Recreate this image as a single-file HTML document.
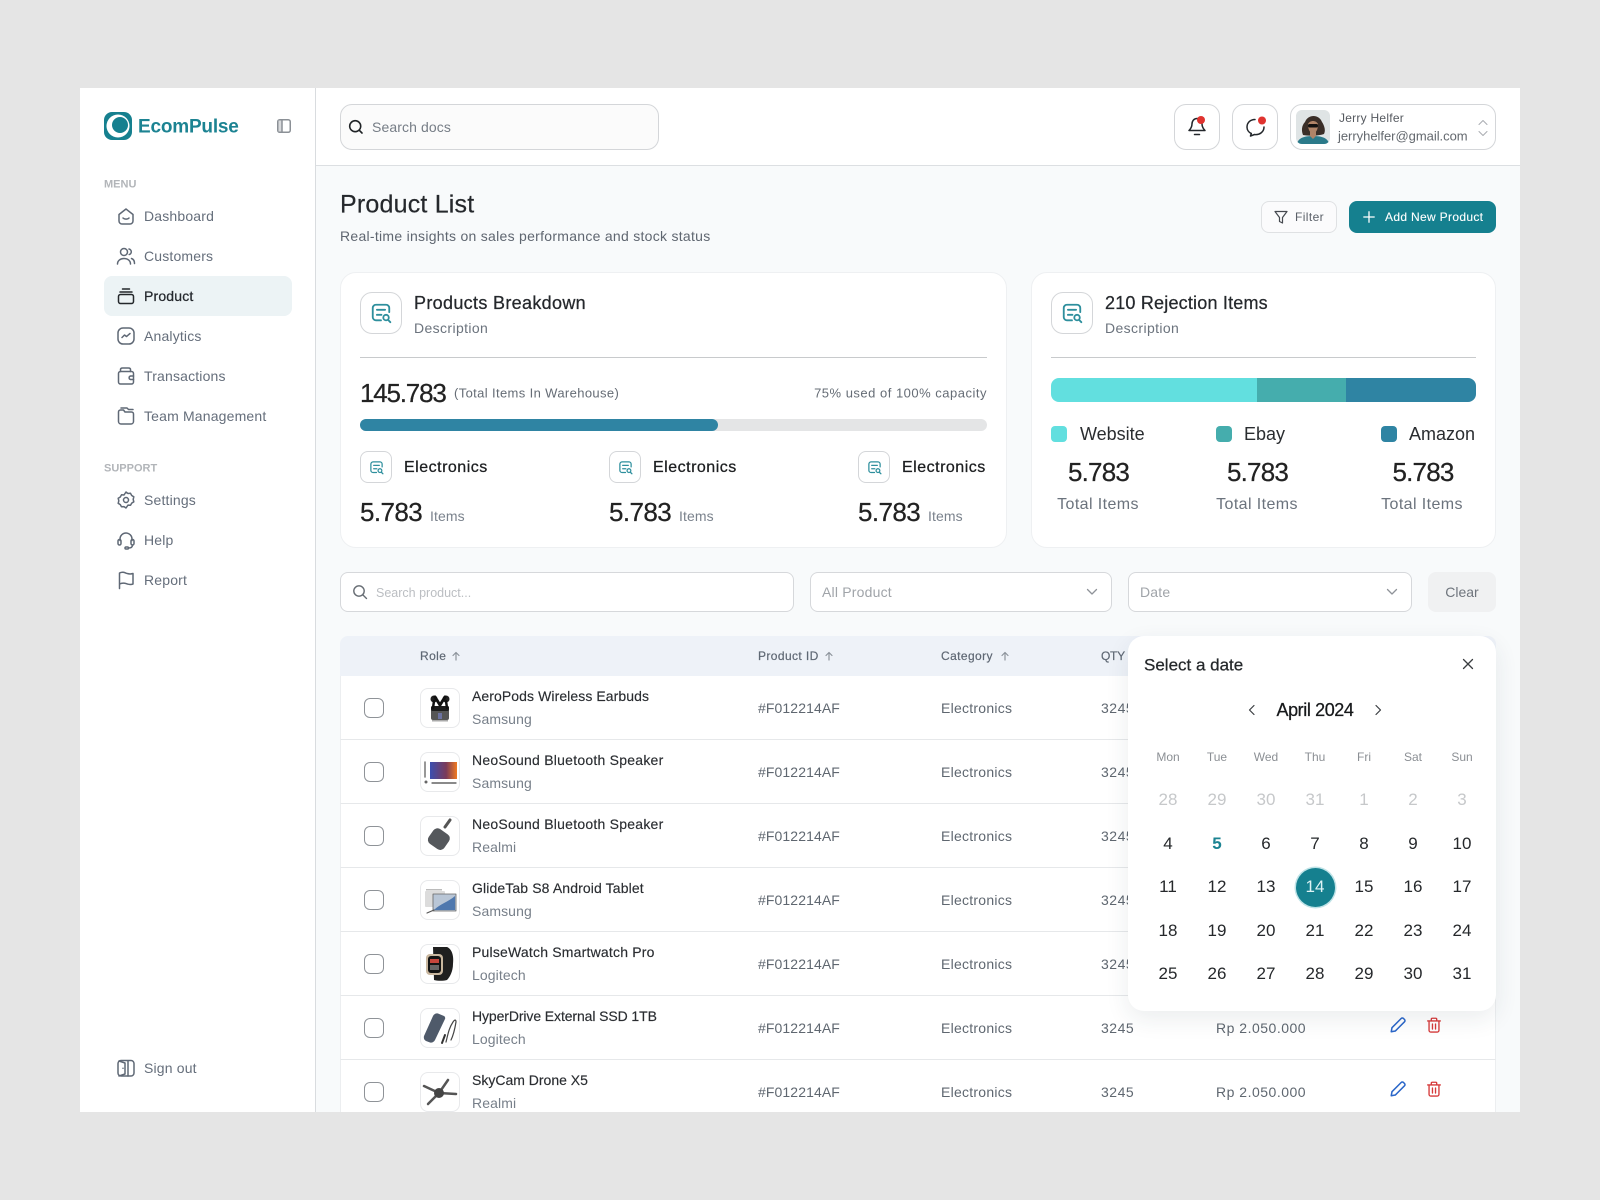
<!DOCTYPE html>
<html lang="en"><head><meta charset="utf-8"><title>EcomPulse</title>
<style>
*{box-sizing:border-box}
html,body{margin:0;padding:0;width:1600px;height:1200px;overflow:hidden;background:#e5e5e5;font-family:"Liberation Sans",sans-serif;color:#222}
.b{position:absolute;display:block}
.t{position:absolute;white-space:nowrap;line-height:1;transform:translateY(-50%)}
.c{transform:translate(-50%,-50%)}
.m{-webkit-text-stroke:.25px currentColor}
svg{position:absolute;overflow:visible;fill:none;stroke-linecap:round;stroke-linejoin:round}
#clip{position:absolute;left:80px;top:88px;width:1440px;height:1024px;overflow:hidden;background:#f8fafb}
#in{position:absolute;left:-80px;top:-88px;width:1600px;height:1200px}
.nav{font-size:14px;color:#656e7b;left:144px;letter-spacing:.17px}
.lab{font-size:11px;color:#b2b5b9;left:104px;font-weight:700}
.ni{stroke:#5f6875;stroke-width:1.5;width:20px;height:20px;left:116px}
.card{background:#fff;border:1px solid #eef0f2;border-radius:16px}
.ib{background:#fff;border:1px solid #d4d6d9}
.sel{background:#fff;border:1px solid #d6d8db;border-radius:8px}
.row{position:absolute;left:340px;width:1156px;height:64px;background:#fff;border-left:1px solid #eceef0;border-right:1px solid #eceef0;border-bottom:1px solid #e6e8ea}
.row>*{margin-left:-1px}
.cb{position:absolute;left:24px;top:22px;width:20px;height:20px;border:1px solid #8f9398;border-radius:6px}
.th{position:absolute;left:80px;top:12px;width:40px;height:40px;border:1px solid #e8e9eb;border-radius:8px;background:#fff;overflow:hidden}
.th svg{left:0;top:0;width:38px;height:38px}
.n{left:132px;top:20px;font-size:14px;color:#2a2d31;-webkit-text-stroke:.15px #2a2d31;letter-spacing:.2px}
.s{left:132px;top:43px;font-size:14px;color:#777f89;letter-spacing:.1px}
.v{top:32px;font-size:14px;color:#5f6770;letter-spacing:.25px}
.id{letter-spacing:.1px}
.q{letter-spacing:.5px}
.p{letter-spacing:.5px}
.hd{font-size:12px;color:#5f6874;top:656px;-webkit-text-stroke:.2px #5f6874;letter-spacing:.4px}
#cal{position:absolute;left:1128px;top:636px;width:368px;height:375px;background:#fff;border-radius:16px;box-shadow:0 8px 24px rgba(30,50,70,.09)}
.gr{position:absolute;left:15.5px;display:grid;grid-template-columns:repeat(7,49px);text-align:center;line-height:20px;height:20px;font-size:17px;color:#25282b}
.gr.h{font-size:12px;color:#8b8f94}
.gr.o{color:#c6c8ca}
</style></head><body>
<svg width="0" height="0" style="position:absolute"><defs>
<symbol id="doc" viewBox="0 0 24 24"><path d="M21 11V6.500A3.500 3.500 0 0 0 17.500 3h-11A3.500 3.500 0 0 0 3 6.500v10A3.500 3.500 0 0 0 6.500 20H12" stroke="#2e8f9d" stroke-width="2" fill="none"/><path d="M7.500 8.500h9M7.500 14h5" stroke="#2e8f9d" stroke-width="2" fill="none"/><circle cx="17.500" cy="17" r="3" stroke="#2e8f9d" stroke-width="2" fill="none"/><path d="M20 19.800l2.200 2.200" stroke="#2e8f9d" stroke-width="2" fill="none"/></symbol>
<symbol id="pen" viewBox="0 0 20 20"><path d="M2.500 17.500l.8-4.500L13.500 2.800a1.800 1.800 0 0 1 2.600 0l1.100 1.100a1.800 1.800 0 0 1 0 2.600L7 16.700z" fill="none" stroke="#2a66c9" stroke-width="1.700"/></symbol>
<symbol id="bin" viewBox="0 0 20 20"><path d="M3 5.500h14M7 5.500V3.500a1 1 0 0 1 1-1h4a1 1 0 0 1 1 1v2M4.500 5.500v10.500a1.800 1.800 0 0 0 1.800 1.800h7.400a1.800 1.800 0 0 0 1.800-1.800V5.500M8.300 9v5.500M11.700 9v5.500" fill="none" stroke="#d63a3a" stroke-width="1.500"/></symbol>
<symbol id="up" viewBox="0 0 10 10"><path d="M5 9V1.500M2 4.500l3-3 3 3" fill="none" stroke="#8d949c" stroke-width="1.200"/></symbol>
</defs></svg>

<div id="clip"><div id="in">
<!-- sidebar -->
<div class="b" style="left:80px;top:88px;width:236px;height:1024px;background:#fff;border-right:1px solid #d9dcdf"></div>
<svg style="left:104px;top:112px" width="28" height="28" viewBox="0 0 28 28"><rect x="0" y="0" width="28" height="28" rx="8" fill="#16808f"/><circle cx="14" cy="14" r="11.500" fill="#fff"/><circle cx="16" cy="13" r="8" fill="#16808f"/></svg>
<div class="t" style="left:138px;top:127px;font-size:19px;font-weight:700;color:#1c8392;letter-spacing:-.2px">EcomPulse</div>
<svg style="left:277px;top:119px" width="14" height="14" viewBox="0 0 14 14"><rect x=".75" y=".75" width="12.500" height="12.500" rx="2" stroke="#8b9096" stroke-width="1.500"/><rect x="1.500" y="1.500" width="3" height="11" fill="#d8dadc"/><path d="M5 1v12" stroke="#8b9096" stroke-width="1.500"/></svg>

<div class="t lab" style="top:185px">MENU</div>
<svg class="ni" style="top:206px" viewBox="0 0 20 20"><path d="M3 8.500L10 3l7 5.500V15a3 3 0 0 1-3 3H6a3 3 0 0 1-3-3z"/><path d="M7 12c1.500 1.500 4.500 1.500 6 0"/></svg>
<div class="t nav" style="top:216px">Dashboard</div>
<svg class="ni" style="top:246px" viewBox="0 0 20 20"><circle cx="8" cy="6" r="3.500"/><path d="M1.500 18c0-3.500 3-5.500 6.500-5.500s6.500 2 6.500 5.500M13 3c1.800.5 2.500 2 2.200 3.500-.2 1-1 1.800-2 2M15.500 12.500c1.800.6 3 2.500 3 5"/></svg>
<div class="t nav" style="top:256px">Customers</div>
<div class="b" style="left:104px;top:276px;width:188px;height:40px;background:#ecf3f5;border-radius:8px"></div>
<svg class="ni" style="top:286px;stroke:#23272b" viewBox="0 0 20 20"><rect x="2.500" y="8.500" width="15" height="9" rx="2"/><path d="M4 6h12M6.500 3h7"/></svg>
<div class="t nav m" style="top:296px;color:#25292e">Product</div>
<svg class="ni" style="top:326px" viewBox="0 0 20 20"><rect x="2" y="2" width="16" height="16" rx="5"/><path d="M6 11.500l2.500-2.500 2 1.500L14 7.500"/></svg>
<div class="t nav" style="top:336px">Analytics</div>
<svg class="ni" style="top:366px" viewBox="0 0 20 20"><rect x="2.500" y="5.500" width="15" height="12.500" rx="2"/><path d="M4.500 5.500V3.500c0-1 1-1.500 2-1.500h6c1 0 2 .5 2 1.500v2M17.500 10h-3a1.800 1.800 0 0 0 0 3.500h3"/></svg>
<div class="t nav" style="top:376px">Transactions</div>
<svg class="ni" style="top:406px" viewBox="0 0 20 20"><path d="M2.500 6v9.500A2.500 2.500 0 0 0 5 18h10a2.500 2.500 0 0 0 2.500-2.500V8A2 2 0 0 0 15.500 6H9L7.500 4H4.500a2 2 0 0 0-2 2zM5 2h6l1.500 1.500H17"/></svg>
<div class="t nav" style="top:416px">Team Management</div>

<div class="t lab" style="top:469px">SUPPORT</div>
<svg class="ni" style="top:490px" viewBox="0 0 20 20"><path d="M10 2l2 1.500 2.500-.2 1.200 2.200 2.100 1.300-.6 2.500.6 2.500-2.100 1.300-1.200 2.200-2.500-.2L10 18l-2-1.400-2.500.2-1.200-2.200-2.100-1.300.6-2.500-.6-2.500 2.100-1.300 1.200-2.200 2.500.2z"/><circle cx="10" cy="10" r="2.500"/></svg>
<div class="t nav" style="top:500px">Settings</div>
<svg class="ni" style="top:530px" viewBox="0 0 20 20"><path d="M4 10.500V9a6 6 0 0 1 12 0v1.500"/><rect x="2" y="9.500" width="3" height="5.500" rx="1.500"/><rect x="15" y="9.500" width="3" height="5.500" rx="1.500"/><path d="M16.500 15c0 2-1.500 3-4 3"/><rect x="9" y="17" width="3.500" height="2" rx="1"/></svg>
<div class="t nav" style="top:540px">Help</div>
<svg class="ni" style="top:570px" viewBox="0 0 20 20"><path d="M3.500 18.500V3c3-1.500 5-.5 7 .3 2 .7 4 1 6.500.2v10.500c-2.500 1-4.500.5-6.500-.3-2-.7-4-1.200-7 .3"/></svg>
<div class="t nav" style="top:580px">Report</div>
<svg class="ni" style="top:1058px" viewBox="0 0 20 20"><rect x="2" y="2.500" width="16" height="15.500" rx="3"/><path d="M12 3v15M7 10.200v.1"/><path d="M3 3l6 2v11l-6 2"/></svg>
<div class="t nav" style="top:1068px">Sign out</div>

<!-- topbar -->
<div class="b" style="left:316px;top:88px;width:1204px;height:78px;background:#fff;border-bottom:1px solid #dcdfe2"></div>
<div class="b" style="left:340px;top:104px;width:319px;height:46px;background:#fbfbfb;border:1px solid #d4d6d9;border-radius:12px"></div>
<svg style="left:348px;top:119px" width="16" height="16" viewBox="0 0 16 16"><circle cx="7.200" cy="7.200" r="5.500" stroke="#1f2326" stroke-width="1.600"/><path d="M11.300 11.300L14 14" stroke="#1f2326" stroke-width="1.600"/></svg>
<div class="t" style="left:372px;top:127px;font-size:14px;color:#767d86;letter-spacing:.1px">Search docs</div>

<div class="b ib" style="left:1174px;top:104px;width:46px;height:46px;border-radius:12px"></div>
<svg style="left:1187px;top:116px" width="20" height="22" viewBox="0 0 20 22"><path d="M10 2.500c-3 0-5 2.500-5 5.500 0 3-1 4.500-3 6.500h16c-2-2-3-3.500-3-6.500 0-3-2-5.500-5-5.500zM7.500 18.500h5" stroke="#23272b" stroke-width="1.500"/><circle cx="14" cy="4" r="4" fill="#e0332f"/></svg>
<div class="b ib" style="left:1232px;top:104px;width:46px;height:46px;border-radius:12px"></div>
<svg style="left:1244px;top:116px" width="24" height="22" viewBox="0 0 24 22"><path d="M11 3.500c-4.500 0-8 3-8 7.500 0 3 1.800 5.500 4.300 6.500l-.8 2.500 4-1.500c5 .7 9.500-2.500 9.500-7.500" stroke="#23272b" stroke-width="1.500"/><circle cx="18" cy="4.500" r="4" fill="#e0332f"/></svg>
<div class="b ib" style="left:1290px;top:104px;width:206px;height:46px;border-radius:12px"></div>
<svg style="left:1296px;top:110px" width="34" height="34" viewBox="0 0 34 34"><clipPath id="av"><rect width="34" height="34" rx="6"/></clipPath><g clip-path="url(#av)"><rect width="34" height="34" fill="#dfe4e5"/><path d="M9 12c-3 3-4 8-2 13 5 1 16 1 21-1 2-4 0-9-2-12-3-8-14-8-17 0z" fill="#3a2e28"/><path d="M1 34c1-6 7-8 16-8s15 2 16 8z" fill="#2b7a8a"/><path d="M12 14c0 6 2 9 5 9s5-3 5-9c-2-4-8-4-10 0z" fill="#b08468"/><path d="M14 20v6l3 3 3-3v-6z" fill="#b08468"/><rect x="12" y="14" width="10" height="3.500" rx="1.500" fill="#111"/></g></svg>
<div class="t" style="left:1339px;top:118px;font-size:12px;color:#55595f;letter-spacing:.25px">Jerry Helfer</div>
<div class="t" style="left:1338px;top:136px;font-size:13px;color:#63686e;letter-spacing:-.03px">jerryhelfer@gmail.com</div>
<svg style="left:1477px;top:119px" width="12" height="18" viewBox="0 0 12 18"><path d="M2 5.500l4-4 4 4M2 12.500l4 4 4-4" stroke="#a8acb0" stroke-width="1"/></svg>

<!-- heading -->
<div class="t" style="left:340px;top:204.500px;font-size:25px;color:#25282c;-webkit-text-stroke:.2px #25282c;letter-spacing:.2px">Product List</div>
<div class="t" style="left:340px;top:236px;font-size:14px;color:#5f6670;letter-spacing:.28px">Real-time insights on sales performance and stock status</div>
<div class="b" style="left:1261px;top:201px;width:76px;height:32px;background:#fbfbfc;border:1px solid #dfe1e3;border-radius:8px"></div>
<svg style="left:1274px;top:210px" width="14" height="15" viewBox="0 0 14 15"><path d="M1 1.500h12L8.500 7.500V13l-3-1.500v-4z" stroke="#45494f" stroke-width="1.200"/></svg>
<div class="t" style="left:1295px;top:217px;font-size:12px;color:#5a6068;letter-spacing:.4px">Filter</div>
<div class="b" style="left:1349px;top:201px;width:147px;height:32px;background:#15808f;border-radius:8px"></div>
<svg style="left:1363px;top:211px" width="12" height="12" viewBox="0 0 12 12"><path d="M6 .8v10.400M.8 6h10.400" stroke="#fff" stroke-width="1.300"/></svg>
<div class="t" style="left:1385px;top:217px;font-size:12px;color:#fff;letter-spacing:.33px;-webkit-text-stroke:.1px #fff">Add New Product</div>

<!-- card 1 -->
<div class="b card" style="left:340px;top:272px;width:667px;height:276px"></div>
<div class="b ib" style="left:360px;top:292px;width:42px;height:42px;border-radius:12px"></div>
<svg style="left:370px;top:302px" width="22" height="22"><use href="#doc"/></svg>
<div class="t m" style="left:414px;top:303px;font-size:18px;color:#25282c;letter-spacing:.33px">Products Breakdown</div>
<div class="t" style="left:414px;top:328px;font-size:14px;color:#6b737d;letter-spacing:.38px">Description</div>
<div class="b" style="left:360px;top:357px;width:627px;height:1px;background:#c8cacc"></div>
<div class="t m" style="left:360px;top:393px;font-size:26px;color:#222;letter-spacing:-1.2px">145.783</div>
<div class="t" style="left:454px;top:393px;font-size:13px;color:#656c75;letter-spacing:.37px">(Total Items In Warehouse)</div>
<div class="t" style="right:613px;top:393px;font-size:13px;color:#656c75;letter-spacing:.5px">75% used of 100% capacity</div>
<div class="b" style="left:360px;top:419px;width:627px;height:12px;background:#e4e5e6;border-radius:6px"></div>
<div class="b" style="left:360px;top:419px;width:358px;height:12px;background:#2f84a3;border-radius:6px"></div>

<div class="b ib" style="left:360px;top:451px;width:32px;height:32px;border-radius:8px"></div>
<svg style="left:369px;top:460px" width="15" height="15"><use href="#doc"/></svg>
<div class="t m" style="left:404px;top:468px;font-size:16px;color:#1c1e20;letter-spacing:.5px">Electronics</div>
<div class="t m" style="left:360px;top:512px;font-size:26px;color:#222;letter-spacing:-.6px">5.783</div>
<div class="t" style="left:430px;top:516px;font-size:14px;color:#7a828c;letter-spacing:.1px">Items</div>

<div class="b ib" style="left:609px;top:451px;width:32px;height:32px;border-radius:8px"></div>
<svg style="left:618px;top:460px" width="15" height="15"><use href="#doc"/></svg>
<div class="t m" style="left:653px;top:468px;font-size:16px;color:#1c1e20;letter-spacing:.5px">Electronics</div>
<div class="t m" style="left:609px;top:512px;font-size:26px;color:#222;letter-spacing:-.6px">5.783</div>
<div class="t" style="left:679px;top:516px;font-size:14px;color:#7a828c;letter-spacing:.1px">Items</div>

<div class="b ib" style="left:858px;top:451px;width:32px;height:32px;border-radius:8px"></div>
<svg style="left:867px;top:460px" width="15" height="15"><use href="#doc"/></svg>
<div class="t m" style="left:902px;top:468px;font-size:16px;color:#1c1e20;letter-spacing:.5px">Electronics</div>
<div class="t m" style="left:858px;top:512px;font-size:26px;color:#222;letter-spacing:-.6px">5.783</div>
<div class="t" style="left:928px;top:516px;font-size:14px;color:#7a828c;letter-spacing:.1px">Items</div>

<!-- card 2 -->
<div class="b card" style="left:1031px;top:272px;width:465px;height:276px"></div>
<div class="b ib" style="left:1051px;top:292px;width:42px;height:42px;border-radius:12px"></div>
<svg style="left:1061px;top:302px" width="22" height="22"><use href="#doc"/></svg>
<div class="t m" style="left:1105px;top:303px;font-size:18px;color:#25282c;letter-spacing:.2px">210 Rejection Items</div>
<div class="t" style="left:1105px;top:328px;font-size:14px;color:#6b737d;letter-spacing:.38px">Description</div>
<div class="b" style="left:1051px;top:357px;width:425px;height:1px;background:#c8cacc"></div>
<div class="b" style="left:1051px;top:378px;width:425px;height:24px;border-radius:8px;background:linear-gradient(90deg,#62dfdf 0 206px,#45adad 206px 295px,#2f84a3 295px)"></div>
<div class="b" style="left:1051px;top:426px;width:16px;height:16px;border-radius:4px;background:#62dfdf"></div>
<div class="t" style="left:1080px;top:434px;font-size:18px;color:#2a2d30">Website</div>
<div class="b" style="left:1216px;top:426px;width:16px;height:16px;border-radius:4px;background:#45adad"></div>
<div class="t" style="left:1244px;top:434px;font-size:18px;color:#2a2d30">Ebay</div>
<div class="b" style="left:1381px;top:426px;width:16px;height:16px;border-radius:4px;background:#2f84a3"></div>
<div class="t" style="left:1409px;top:434px;font-size:18px;color:#2a2d30">Amazon</div>
<div class="t m c" style="left:1098.500px;top:472px;font-size:26px;color:#222;letter-spacing:-.8px">5.783</div>
<div class="t m c" style="left:1257.500px;top:472px;font-size:26px;color:#222;letter-spacing:-.8px">5.783</div>
<div class="t m c" style="left:1423px;top:472px;font-size:26px;color:#222;letter-spacing:-.8px">5.783</div>
<div class="t c" style="left:1098px;top:505px;font-size:16px;color:#6b737d;letter-spacing:.4px">Total Items</div>
<div class="t c" style="left:1257px;top:505px;font-size:16px;color:#6b737d;letter-spacing:.4px">Total Items</div>
<div class="t c" style="left:1422px;top:505px;font-size:16px;color:#6b737d;letter-spacing:.4px">Total Items</div>

<!-- filters -->
<div class="b sel" style="left:340px;top:572px;width:454px;height:40px"></div>
<svg style="left:352px;top:584px" width="16" height="16" viewBox="0 0 16 16"><circle cx="7" cy="7" r="5.200" stroke="#666c73" stroke-width="1.400"/><path d="M11 11l3.500 3.500" stroke="#666c73" stroke-width="1.400"/></svg>
<div class="t" style="left:376px;top:593px;font-size:12.500px;color:#bbbec2">Search product...</div>
<div class="b sel" style="left:810px;top:572px;width:302px;height:40px"></div>
<div class="t" style="left:822px;top:592px;font-size:14px;color:#a0a4a9;letter-spacing:.2px">All Product</div>
<svg style="left:1086px;top:588px" width="12" height="8" viewBox="0 0 12 8"><path d="M1.500 1.500L6 6l4.500-4.500" stroke="#8f9399" stroke-width="1.300"/></svg>
<div class="b sel" style="left:1128px;top:572px;width:284px;height:40px"></div>
<div class="t" style="left:1140px;top:592px;font-size:14px;color:#a0a4a9;letter-spacing:.2px">Date</div>
<svg style="left:1386px;top:588px" width="12" height="8" viewBox="0 0 12 8"><path d="M1.500 1.500L6 6l4.500-4.500" stroke="#8f9399" stroke-width="1.300"/></svg>
<div class="b" style="left:1428px;top:572px;width:68px;height:40px;background:#f0f1f2;border-radius:8px"></div>
<div class="t c" style="left:1462px;top:592px;font-size:14px;color:#6f757d">Clear</div>

<!-- table header -->
<div class="b" style="left:340px;top:636px;width:1156px;height:40px;background:#eef2f8;border-radius:8px 8px 0 0"></div>
<div class="t hd" style="left:420px">Role</div><svg style="left:451px;top:651px" width="10" height="10"><use href="#up"/></svg>
<div class="t hd" style="left:758px">Product ID</div><svg style="left:824px;top:651px" width="10" height="10"><use href="#up"/></svg>
<div class="t hd" style="left:941px">Category</div><svg style="left:1000px;top:651px" width="10" height="10"><use href="#up"/></svg>
<div class="t hd" style="left:1101px;letter-spacing:-.3px">QTY</div>

<!-- rows -->
<div class="row" style="top:676px"><div class="cb"></div><div class="th"><svg viewBox="0 0 38 38"><rect x="10" y="20" width="18" height="11" rx="2" fill="#555"/><rect x="10" y="17" width="18" height="5" rx="1.500" fill="#1c1c1c"/><circle cx="13" cy="10" r="3.500" fill="#222"/><circle cx="25" cy="10" r="3.500" fill="#222"/><path d="M14 8l5 8M24 8l-5 8" stroke="#111" stroke-width="3"/><path d="M13 12l-1 7M25 12l1 7" stroke="#111" stroke-width="2.500"/><rect x="17" y="24" width="4" height="6" fill="#6c72a0"/><rect x="11" y="31" width="16" height="1.500" fill="#aaa"/></svg></div><div class="t n" style="letter-spacing:.08px">AeroPods Wireless Earbuds</div><div class="t s">Samsung</div><div class="t v id" style="left:418px">#F012214AF</div><div class="t v" style="left:601px">Electronics</div><div class="t v q" style="left:761px">3245</div></div>

<div class="row" style="top:740px"><div class="cb"></div><div class="th"><svg viewBox="0 0 38 38"><defs><linearGradient id="tv" x1="0" x2="1"><stop offset="0" stop-color="#3b4fb0"/><stop offset=".6" stop-color="#7a3a5a"/><stop offset="1" stop-color="#f07a20"/></linearGradient></defs><rect x="9" y="9" width="27" height="17" fill="url(#tv)"/><path d="M4 9v15" stroke="#777" stroke-width="1.500"/><path d="M11 30h24" stroke="#444" stroke-width="1.200"/><circle cx="5" cy="29" r="1.500" fill="#666"/></svg></div><div class="t n" style="letter-spacing:.24px">NeoSound Bluetooth Speaker</div><div class="t s">Samsung</div><div class="t v id" style="left:418px">#F012214AF</div><div class="t v" style="left:601px">Electronics</div><div class="t v q" style="left:761px">3245</div></div>

<div class="row" style="top:804px"><div class="cb"></div><div class="th"><svg viewBox="0 0 38 38"><path d="M24 10l5-7" stroke="#555" stroke-width="3"/><g transform="rotate(35 18 21)"><rect x="9" y="13" width="19" height="18" rx="5" fill="#55585c"/></g></svg></div><div class="t n" style="letter-spacing:.24px">NeoSound Bluetooth Speaker</div><div class="t s">Realmi</div><div class="t v id" style="left:418px">#F012214AF</div><div class="t v" style="left:601px">Electronics</div><div class="t v q" style="left:761px">3245</div></div>

<div class="row" style="top:868px"><div class="cb"></div><div class="th"><svg viewBox="0 0 38 38"><rect x="4" y="10" width="20" height="16" rx="1" fill="#dcdcdc"/><rect x="5" y="8" width="16" height="1.500" fill="#bbb"/><rect x="12" y="13" width="23" height="17" fill="#b9c6d6" stroke="#666" stroke-width=".8"/><path d="M13 29c6-6 14-8 21-14v14z" fill="#4f78ae"/><path d="M6 32l7-3" stroke="#555" stroke-width="1.200"/></svg></div><div class="t n" style="letter-spacing:.12px">GlideTab S8 Android Tablet</div><div class="t s">Samsung</div><div class="t v id" style="left:418px">#F012214AF</div><div class="t v" style="left:601px">Electronics</div><div class="t v q" style="left:761px">3245</div></div>

<div class="row" style="top:932px"><div class="cb"></div><div class="th"><svg viewBox="0 0 38 38"><path d="M12 2h14c5 2 7 9 6 17 0 7-3 13-6 16-4 1-9 1-13 0z" fill="#1f1f1f"/><rect x="5" y="9" width="17" height="21" rx="4" fill="#c9b79f"/><rect x="7" y="11" width="13" height="17" rx="3" fill="#141414"/><rect x="9" y="14" width="9" height="4" fill="#c6463c"/><rect x="9" y="20" width="9" height="5" fill="#666"/></svg></div><div class="t n">PulseWatch Smartwatch Pro</div><div class="t s">Logitech</div><div class="t v id" style="left:418px">#F012214AF</div><div class="t v" style="left:601px">Electronics</div><div class="t v q" style="left:761px">3245</div></div>

<div class="row" style="top:996px"><div class="cb"></div><div class="th"><svg viewBox="0 0 38 38"><path d="M3 27L12 7c1-2 3-3 5-2.500l6 2.500c1 .5 1.500 2 1 3L14 31c-1 2-3 3-5 2.500L5 32c-2-1-2.500-3-2-5z" fill="#4f5a6a"/><path d="M25 33c2-8 3-14 7-20 2-3 3-2 3 0-1 6-2 12-5 18" stroke="#444" stroke-width="1.200"/><path d="M21 34l3-8" stroke="#333" stroke-width="2"/></svg></div><div class="t n" style="letter-spacing:-.1px">HyperDrive External SSD 1TB</div><div class="t s">Logitech</div><div class="t v id" style="left:418px">#F012214AF</div><div class="t v" style="left:601px">Electronics</div><div class="t v q" style="left:761px">3245</div><div class="t v p" style="left:876px">Rp 2.050.000</div><svg style="left:1049px;top:20px" width="18" height="18"><use href="#pen"/></svg><svg style="left:1085px;top:20px" width="18" height="18"><use href="#bin"/></svg></div>

<div class="row" style="top:1060px"><div class="cb"></div><div class="th"><svg viewBox="0 0 38 38"><path d="M3 13l15 7M27 7l-9 13M18 20l17 1M18 20L7 31" stroke="#555" stroke-width="2.500"/><circle cx="18" cy="20" r="5" fill="#444"/></svg></div><div class="t n" style="letter-spacing:0">SkyCam Drone X5</div><div class="t s">Realmi</div><div class="t v id" style="left:418px">#F012214AF</div><div class="t v" style="left:601px">Electronics</div><div class="t v q" style="left:761px">3245</div><div class="t v p" style="left:876px">Rp 2.050.000</div><svg style="left:1049px;top:20px" width="18" height="18"><use href="#pen"/></svg><svg style="left:1085px;top:20px" width="18" height="18"><use href="#bin"/></svg></div>

<!-- calendar -->
<div id="cal">
<div class="t m" style="left:16px;top:29px;font-size:17px;color:#25282b">Select a date</div>
<svg style="left:334px;top:22px" width="12" height="12" viewBox="0 0 12 12"><path d="M1.500 1.500l9 9M10.500 1.500l-9 9" stroke="#3a3d40" stroke-width="1.300"/></svg>
<svg style="left:120px;top:68px" width="8" height="12" viewBox="0 0 8 12"><path d="M6 1.500L1.500 6 6 10.500" stroke="#3a3d40" stroke-width="1.200"/></svg>
<svg style="left:246px;top:68px" width="8" height="12" viewBox="0 0 8 12"><path d="M2 1.500L6.500 6 2 10.500" stroke="#3a3d40" stroke-width="1.200"/></svg>
<div class="t m c" style="left:187px;top:74px;font-size:18px;color:#17191b;letter-spacing:-.4px">April 2024</div>
<div class="gr h" style="top:111px"><span>Mon</span><span>Tue</span><span>Wed</span><span>Thu</span><span>Fri</span><span>Sat</span><span>Sun</span></div>
<div class="gr o" style="top:154px"><span>28</span><span>29</span><span>30</span><span>31</span><span>1</span><span>2</span><span>3</span></div>
<div class="gr" style="top:198px"><span>4</span><span style="color:#1c8392;font-weight:700">5</span><span>6</span><span>7</span><span>8</span><span>9</span><span>10</span></div>
<div class="b" style="left:167.500px;top:231.500px;width:39px;height:39px;border-radius:50%;background:#15808f;box-shadow:0 0 0 1.500px #bfe3e7"></div>
<div class="gr" style="top:241px"><span>11</span><span>12</span><span>13</span><span style="color:#dff3f5">14</span><span>15</span><span>16</span><span>17</span></div>
<div class="gr" style="top:285px"><span>18</span><span>19</span><span>20</span><span>21</span><span>22</span><span>23</span><span>24</span></div>
<div class="gr" style="top:328px"><span>25</span><span>26</span><span>27</span><span>28</span><span>29</span><span>30</span><span>31</span></div>
</div>
</div></div>
</body></html>
